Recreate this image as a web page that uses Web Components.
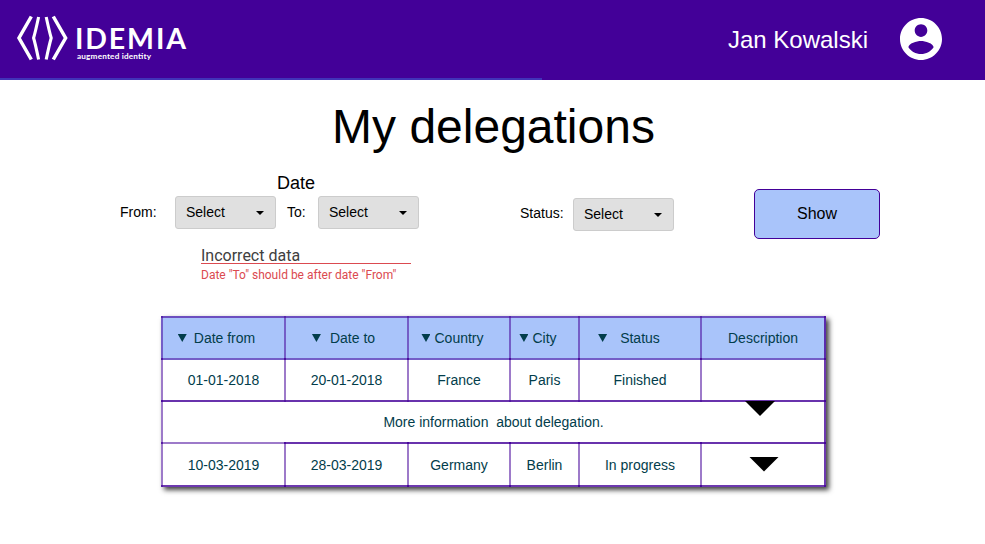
<!DOCTYPE html>
<html lang="en">
<head>
<meta charset="utf-8">
<title>My delegations</title>
<style>
html,body{margin:0;padding:0;background:#fff}
body{font-family:"Liberation Sans",Arial,sans-serif;color:#000;width:985px;height:544px;overflow:hidden}
</style>
</head>
<body>
<delegations-page></delegations-page>
<script>
function define(name, html){
  const t=document.createElement('template');
  t.innerHTML=html;
  customElements.define(name,class extends HTMLElement{
    constructor(){
      super();
      this.attachShadow({mode:'open'}).append(t.content.cloneNode(true));
    }
  });
}

define('brand-logo',`
<style>:host{display:block;width:200px;height:78px}svg{display:block}</style>
<svg width="200" height="78" viewBox="0 0 200 78">
  <g fill="none" stroke="#fff" stroke-width="3.5">
    <path d="M31.3 16.5 L19 38 L31.3 59.5"/>
    <path d="M38.6 17 Q35.6 31 33.6 38 Q35.6 45 38.6 59.5" stroke-width="3.1"/>
    <path d="M46.2 17 Q49.2 31 51.2 38 Q49.2 45 46.2 59.5" stroke-width="3.1"/>
    <path d="M53.3 16.5 L65.6 38 L53.3 59.5"/>
  </g>
  <text x="75" y="48.5" font-family="Lato,sans-serif" font-weight="700" font-size="28.5" textLength="111" fill="#fff">IDEMIA</text>
  <text x="77" y="59" font-family="Lato,sans-serif" font-weight="700" font-size="8.2" textLength="74" fill="#fff">augmented identity</text>
</svg>`);

define('user-badge',`
<style>:host{display:flex;align-items:center;font-size:24px;line-height:28px;color:#fff;gap:32px}
svg{display:block;width:42px;height:42px}span{padding-top:1px}</style>
<span><slot></slot></span>
<svg viewBox="2 2 20 20"><path fill="#fff" d="M12 2C6.48 2 2 6.48 2 12s4.48 10 10 10 10-4.48 10-10S17.52 2 12 2zm0 3c1.66 0 3 1.34 3 3s-1.34 3-3 3-3-1.34-3-3 1.34-3 3-3zm0 14.2c-2.5 0-4.71-1.28-6-3.22.03-1.99 4-3.08 6-3.08 1.99 0 5.97 1.09 6 3.08-1.29 1.94-3.5 3.22-6 3.22z"/></svg>`);

define('app-header',`
<style>:host{display:flex;justify-content:space-between;box-sizing:border-box;height:80px;padding-right:43px;
background:linear-gradient(#4133b8,#4133b8) 0 78px/542px 2px no-repeat #430098}
user-badge{height:78px}</style>
<brand-logo></brand-logo><user-badge><slot></slot></user-badge>`);

define('select-box',`
<style>:host{display:flex;box-sizing:border-box;width:101px;height:33px;padding:0 11px 2px 10px;align-items:center;justify-content:space-between;
border:1px solid #ccc;border-radius:3px;background:#e0e0e0;font-size:14px;line-height:16px}
i{border:4px solid transparent;border-top-color:#000;border-bottom:0;margin-top:2px}</style>
<slot></slot><i></i>`);

define('action-button',`
<style>:host{display:flex;box-sizing:border-box;width:126px;height:50px;padding-bottom:1px;align-items:center;justify-content:center;
border:1px solid #430098;border-radius:5px;background:#a9c4fa;font-size:16px;line-height:18px}</style>
<slot></slot>`);

define('field-error',`
<style>:host{display:block;width:210px;font-family:Roboto,sans-serif}
.v{height:16px;line-height:18px;font-size:16px;color:#404040;border-bottom:1px solid #db4a50}
.m{font-size:12px;line-height:14px;padding-top:4px;color:#db4a50}</style>
<div class="v"><slot></slot></div><div class="m"><slot name="message"></slot></div>`);

define('filter-bar',`
<style>:host{display:flex;font-size:14px;line-height:16px;padding-left:120px}
.dates{width:300px}
.t{font-size:18px;line-height:20px;padding-left:157px;height:23px}
.r{display:flex;align-items:center}
.r span{padding-bottom:2px}
.f{width:55px}.to{width:31px;padding-left:11px}
field-error{margin:18px 0 0 81px}
.status{display:flex;align-items:flex-start;padding:25px 0 0 100px}
.status span{width:53px;padding-top:7px}
action-button{margin:16px 0 0 80px}</style>
<div class="dates"><div class="t">Date</div>
<div class="r"><span class="f" style="padding-bottom:1px">From:</span><select-box>Select</select-box><span class="to">To:</span><select-box>Select</select-box></div>
<field-error>Incorrect data<span slot="message">Date "To" should be after date "From"</span></field-error></div>
<div class="status"><span>Status:</span><select-box>Select</select-box></div>
<action-button>Show</action-button>`);

/* Cells share 2px translucent edges, so junctions come out darker. */
define('table-cell',`
<style>:host{display:flex;align-items:center;justify-content:center;position:relative;margin:0 -2px -2px 0;white-space:pre;
--v:rgba(67,0,152,.52);--h:rgba(67,0,152,.8);--r:transparent;--b:transparent;--bg:transparent;
background:linear-gradient(var(--v),var(--v)) 0 0/2px 100% no-repeat,linear-gradient(var(--h),var(--h)) 0 0/100% 2px no-repeat,
linear-gradient(var(--r),var(--r)) 100% 0/2px 100% no-repeat,linear-gradient(var(--b),var(--b)) 0 100%/100% 2px no-repeat,var(--bg)}
:host([head]){--bg:#a9c4fa;--h:rgba(67,0,152,.6)}
:host([light]){--h:rgba(67,0,152,.52)}
:host([end]){--r:rgba(67,0,152,.78)}
:host([last]){--b:rgba(67,0,152,.78)}
:host([wide]){grid-column:1/-1}</style>
<slot></slot>`);

define('sort-mark',`
<style>:host{display:block;width:9px;height:8px;background:#023d4b;clip-path:polygon(0 0,100% 0,50% 100%);margin-right:var(--gap,7px)}</style>`);

define('expand-arrow',`
<style>:host{display:block;width:30px;height:15px;background:#000;clip-path:polygon(0 0,100% 0,50% 100%)}</style>`);

define('delegation-table',`
<style>:host{display:grid;grid-template-columns:123px 123px 102px 69px 122px 124px;grid-template-rows:42px 42px 42px 43px;
padding:0 2px 2px 0;background:#fff;box-shadow:3px 3px 5px rgba(0,0,0,.75);font-size:14px;line-height:16px;color:#023d4b}
.a{position:absolute;top:1px;left:584px}
.b{margin:-1px 0 0 2px}</style>
<table-cell head style="padding-right:14px"><sort-mark></sort-mark>Date from</table-cell>
<table-cell head style="padding-right:17px"><sort-mark style="--gap:9px;margin-left:11px"></sort-mark>Date to</table-cell>
<table-cell head style="padding-right:13px"><sort-mark style="--gap:4px"></sort-mark>Country</table-cell>
<table-cell head style="padding-right:13px"><sort-mark style="--gap:4px"></sort-mark>City</table-cell>
<table-cell head style="padding-right:22px"><sort-mark style="--gap:13px"></sort-mark>Status</table-cell>
<table-cell head end>Description</table-cell>
<table-cell light>01-01-2018</table-cell><table-cell light>20-01-2018</table-cell><table-cell light>France</table-cell><table-cell light>Paris</table-cell><table-cell light>Finished</table-cell><table-cell light end></table-cell>
<table-cell wide end>More information  about delegation.<expand-arrow class="a"></expand-arrow></table-cell>
<table-cell light last>10-03-2019</table-cell><table-cell last>28-03-2019</table-cell><table-cell last>Germany</table-cell><table-cell last>Berlin</table-cell><table-cell last>In progress</table-cell><table-cell last end><expand-arrow class="b"></expand-arrow></table-cell>`);

define('delegations-page',`
<style>:host{display:block}
h1{margin:0;padding:19px 0 0 2px;font-weight:400;font-size:48px;line-height:55px;text-align:center;width:985px;height:93px;box-sizing:border-box}
filter-bar{height:143px}
delegation-table{width:663px;margin-left:161px}</style>
<app-header>Jan Kowalski</app-header>
<h1>My delegations</h1>
<filter-bar></filter-bar>
<delegation-table></delegation-table>`);
</script>
</body>
</html>
